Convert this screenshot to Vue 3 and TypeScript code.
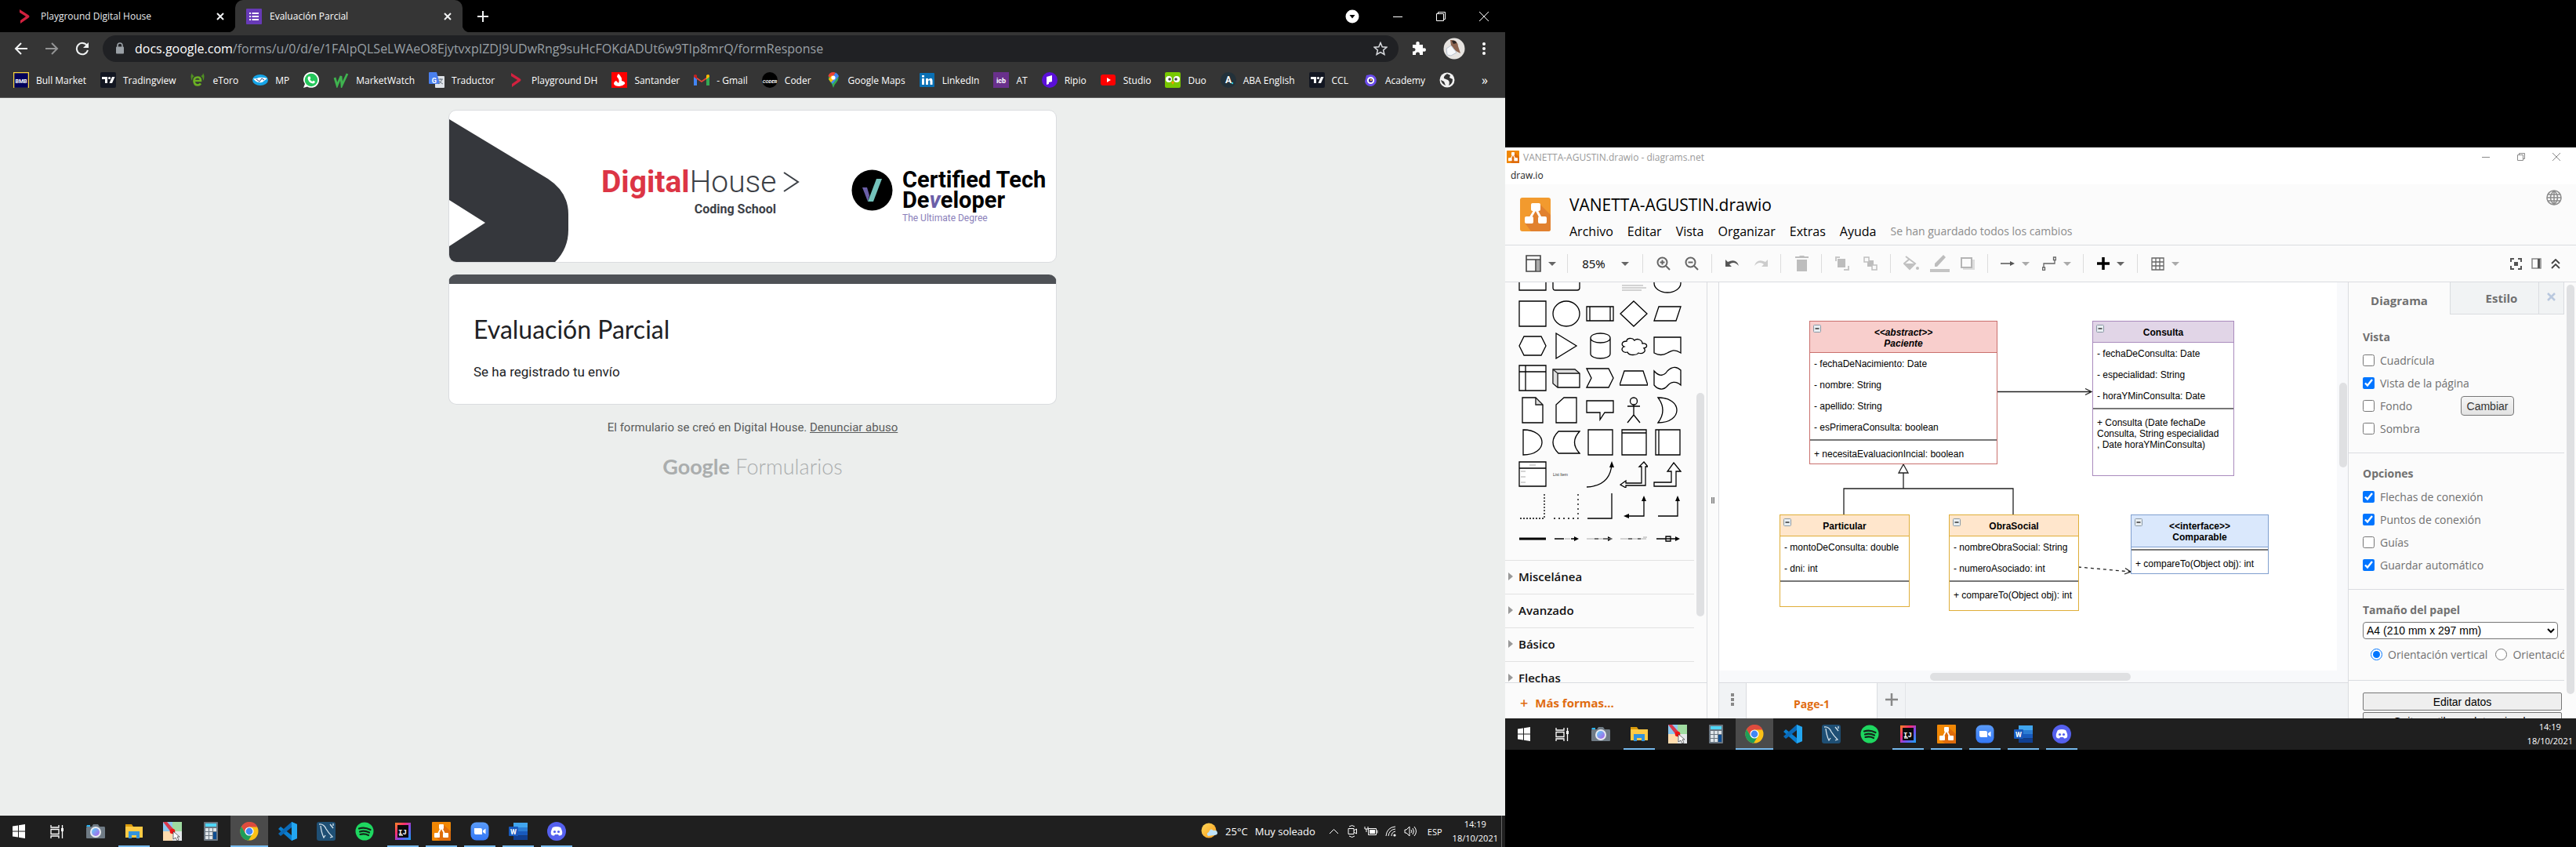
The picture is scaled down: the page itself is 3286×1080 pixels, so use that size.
<script setup lang="ts">
interface Bookmark { icon: string; label: string; mark?: string }
interface Shape { p?: string; solid?: string; grey?: string; w?: number; dash?: string; open?: boolean; text?: string; thin?: string }
interface UmlBox { id: string; head: string[]; attrs: string[]; methods: string[] }
interface Task { icon: string; name: string; state?: 'open' | 'active'; mark?: string }

const bookmarks: Bookmark[] = [
  { icon: 'bmb', label: 'Bull Market', mark: 'BMB' },
  { icon: 'tv', label: 'Tradingview' },
  { icon: 'etoro', label: 'eToro' },
  { icon: 'mp', label: 'MP' },
  { icon: 'wa', label: '' },
  { icon: 'mw', label: 'MarketWatch' },
  { icon: 'trad', label: 'Traductor', mark: 'G' },
  { icon: 'dh', label: 'Playground DH' },
  { icon: 'sant', label: 'Santander' },
  { icon: 'gmail', label: '- Gmail' },
  { icon: 'coder', label: 'Coder', mark: 'CODER' },
  { icon: 'maps', label: 'Google Maps' },
  { icon: 'li', label: 'LinkedIn' },
  { icon: 'icb', label: 'AT', mark: 'icb' },
  { icon: 'ripio', label: 'Ripio' },
  { icon: 'yt', label: 'Studio' },
  { icon: 'duo', label: 'Duo' },
  { icon: 'aba', label: 'ABA English', mark: 'A' },
  { icon: 'tv', label: 'CCL' },
  { icon: 'acad', label: 'Academy' },
  { icon: 'world', label: '' },
]

const tasks: Task[] = [
  { icon: 'win', name: 'Inicio' },
  { icon: 'taskview', name: 'Vista de tareas' },
  { icon: 'camera', name: 'Cámara' },
  { icon: 'folder', name: 'Explorador', state: 'open' },
  { icon: 'pick', name: 'Selector' },
  { icon: 'calc', name: 'Calculadora' },
  { icon: 'chrome', name: 'Chrome', state: 'active' },
  { icon: 'code', name: 'Code' },
  { icon: 'mysql', name: 'Workbench' },
  { icon: 'spotify', name: 'Spotify' },
  { icon: 'ij', name: 'IntelliJ', state: 'open', mark: 'IJ' },
  { icon: 'drawio', name: 'draw.io', state: 'open' },
  { icon: 'zoomapp', name: 'Zoom', state: 'open' },
  { icon: 'word', name: 'Word', state: 'open', mark: 'W' },
  { icon: 'discord', name: 'Discord', state: 'open' },
]

const shapes: Shape[] = [
  { p: 'M1 10H35V28H1Z' },
  { p: 'M4 10H32Q35 10 35 13V25Q35 28 32 28H4Q1 28 1 25V13Q1 10 4 10Z' },
  {},
  { thin: 'M3 22H30M3 25H34M3 28H28' },
  { p: 'M18 7A17 12 0 1 1 18 31A17 12 0 1 1 18 7Z' },
  { p: 'M1 1H35V33H1Z' },
  { p: 'M18 1A17 16 0 1 1 18 33A17 16 0 1 1 18 1Z' },
  { p: 'M1 8H35V26H1ZM5 8V26M31 8V26' },
  { p: 'M18 1L35 17L18 33L1 17Z' },
  { p: 'M7 8H35L29 26H1Z' },
  { p: 'M7 5H29L35 17L29 29H7L1 17Z' },
  { p: 'M5 1L31 17L5 33Z' },
  { p: 'M6 7V27C6 35 31 35 31 27V7M6 7C6 -1 31 -1 31 7C31 15 6 15 6 7Z' },
  { p: 'M9 11C3 11 1 16 6 18C0 20 4 27 10 25C12 30 22 29 24 26C29 28 35 24 31 20C37 19 35 13 29 14C29 9 22 7 19 10C16 6 9 7 9 11Z' },
  { p: 'M1 6H35V26C26 20 22 24 18 26C13 29 8 30 1 26Z' },
  { p: 'M1 1H35V33H1ZM9 1V33M1 9H35' },
  { p: 'M1 6H29L35 11V29H7L1 24ZM7 11V29M7 11H35M1 6L7 11', grey: 'M1 6H29L35 11H7V29L1 24Z' },
  { p: 'M1 5H29L35 17L29 29H1L7 17Z' },
  { p: 'M6 8H30L36 26H0Z' },
  { p: 'M1 8C8 16 14 14 18 8C24 2 30 2 35 7V26C29 20 22 22 18 27C13 33 6 32 1 26Z' },
  { p: 'M5 1H22L31 10V33H5Z M22 1V10H31', grey: 'M22 1L31 10H22Z' },
  { p: 'M15 1H31V33H5V10Z' },
  { p: 'M1 5H35V20H24L18 29V20H1Z' },
  { p: 'M18 1A4 4 0 1 1 18 10A4 4 0 1 1 18 1ZM18 10V23M10 12H26M18 23L10 33M18 23L26 33', open: true },
  { p: 'M6 1C38 1 38 33 6 33Q18 17 6 1Z' },
  { p: 'M6 1C38 1 38 33 6 33Z' },
  { p: 'M8 3H35Q22 17 35 31H8Q-6 17 8 3Z' },
  { p: 'M3 1H34V33H3Z' },
  { p: 'M3 1H34V33H3ZM3 5H34' },
  { p: 'M3 1H34V33H3ZM7 1V33' },
  { p: 'M1 1H35V32H1ZM1 9H35', thin: 'M14 5H22M3 13H9M3 20H9M3 27H9' },
  { text: 'List Item' },
  { p: 'M1 33C21 32 32 22 33 3', solid: 'M33 0L30 8H36Z', open: true },
  { p: 'M31 1L36 7H33V31H8V34L1 30L8 25V28H28V7H25Z' },
  { p: 'M26 2L35 13H29V32H1V27H23V13H18Z' },
  { p: 'M2 32H33V0', dash: '2 2', open: true },
  { p: 'M2 32H33V0', dash: '2 4', open: true },
  { p: 'M2 32H33V0', open: true },
  { p: 'M8 29H31V8', solid: 'M31 3L28 10H34ZM5 29L12 26V32Z', open: true },
  { p: 'M6 29H31V8', solid: 'M31 3L28 10H34Z', open: true },
  { p: 'M1 17H35', w: 3, open: true },
  { p: 'M3 17H15M24 17H31', solid: 'M34 17L28 14V20Z', thin: 'M16 17H23', open: true },
  { p: 'M11 17H16M22 17H31', solid: 'M34 17L28 14V20Z', thin: 'M1 17H34', open: true },
  { p: 'M11 17H16M23 17H27', thin: 'M1 17H34M30 15H35', open: true },
  { p: 'M4 17H31M16 14H22V20H16Z', solid: 'M34 17L28 14V20Z' },
]

const sections = ['Miscelánea', 'Avanzado', 'Básico', 'Flechas']
const menus = ['Archivo', 'Editar', 'Vista', 'Organizar', 'Extras', 'Ayuda']

const boxes: UmlBox[] = [
  {
    id: 'paciente',
    head: ['<<abstract>>', 'Paciente'],
    attrs: ['- fechaDeNacimiento: Date', '- nombre: String', '- apellido: String', '- esPrimeraConsulta: boolean'],
    methods: ['+ necesitaEvaluacionIncial: boolean'],
  },
  {
    id: 'consulta',
    head: ['Consulta'],
    attrs: ['- fechaDeConsulta: Date', '- especialidad: String', '- horaYMinConsulta: Date'],
    methods: ['+ Consulta (Date fechaDe', 'Consulta, String especialidad', ', Date horaYMinConsulta)'],
  },
  { id: 'particular', head: ['Particular'], attrs: ['- montoDeConsulta: double', '- dni: int'], methods: [] },
  {
    id: 'obra',
    head: ['ObraSocial'],
    attrs: ['- nombreObraSocial: String', '- numeroAsociado: int'],
    methods: ['+ compareTo(Object obj): int'],
  },
  { id: 'comparable', head: ['<<interface>>', 'Comparable'], attrs: [], methods: ['+ compareTo(Object obj): int'] },
]

const viewOptions = [
  { label: 'Cuadrícula', on: false },
  { label: 'Vista de la página', on: true },
  { label: 'Fondo', on: false },
  { label: 'Sombra', on: false },
]
const editOptions = [
  { label: 'Flechas de conexión', on: true },
  { label: 'Puntos de conexión', on: true },
  { label: 'Guías', on: false },
  { label: 'Guardar automático', on: true },
]
</script>

<template>
  <div class="desk">
    <svg class="defs" aria-hidden="true">
      <defs>
        <linearGradient id="gLens" x1="0" y1="0" x2="1" y2="1"><stop offset="0" stop-color="#5ad1f5" /><stop offset="1" stop-color="#b05be8" /></linearGradient>
        <linearGradient id="gIj" x1="0" y1="0" x2="1" y2="1"><stop offset="0" stop-color="#ff8a1f" /><stop offset=".35" stop-color="#fb2c74" /><stop offset=".6" stop-color="#7a4bf0" /><stop offset="1" stop-color="#18a5f5" /></linearGradient>
        <linearGradient id="gSun" x1="0" y1="0" x2="1" y2="1"><stop offset="0" stop-color="#ffd85a" /><stop offset="1" stop-color="#f79b1a" /></linearGradient>
        <linearGradient id="gZoom" x1="0" y1="0" x2="0" y2="1"><stop offset="0" stop-color="#5a9bf8" /><stop offset="1" stop-color="#3478f6" /></linearGradient>
      </defs>
      <symbol id="dh" viewBox="0 0 20 20"><path d="M3 1L14 8Q17 10 14 12L4 19V15L11 10L3 5Z" fill="#d2213f" /></symbol>
      <symbol id="forms" viewBox="0 0 20 20"><rect width="20" height="20" rx="1" fill="#673ab7" /><path d="M7.500 6H16M7.500 10H16M7.500 14H16" stroke="#fff" stroke-width="2" /><path d="M4 6H6M4 10H6M4 14H6" stroke="#fff" stroke-width="2" /></symbol>
      <symbol id="bmb" viewBox="0 0 20 20"><rect x=".5" y=".5" width="19" height="19" fill="#02025c" /><path d="M.500 20V.500H19.500V20" fill="none" stroke="#f5d33b" stroke-width="1.500" /></symbol>
      <symbol id="tv" viewBox="0 0 20 20"><rect width="20" height="20" rx="2" fill="#131722" /><path d="M2 6H9V14H6V9H2ZM15 6H18.500L15 14H11.500Z" fill="#fff" /><circle cx="11.500" cy="7.500" r="1.600" fill="#fff" /></symbol>
      <symbol id="etoro" viewBox="0 0 20 20"><path d="M5.500 11H14Q14 6.500 10 6.500Q5.500 6.500 5.500 11.500Q6 16.500 10 16.500Q12.500 16.500 14 14.500" fill="none" stroke="#6ab023" stroke-width="2.600" /><path d="M3 1Q0 6 3 11Q3 6 6 5Q3 4 3 1ZM17 1Q20 6 17 11Q17 6 14 5Q17 4 17 1Z" fill="#4f8f22" /></symbol>
      <symbol id="mp" viewBox="0 0 20 20"><ellipse cx="10" cy="10" rx="10" ry="7" fill="#16a5e8" /><path d="M1 8Q5 9 8 7Q12 6 19 8L15 11Q12 14 9 13Q4 13 1 8Z" fill="#fff" /><path d="M5 9L9 12L12 8L15 10" stroke="#2a3f7b" fill="none" /></symbol>
      <symbol id="wa" viewBox="0 0 20 20"><path d="M0 20L2 15Q0 12 0 10A10 10 0 1 1 5 18.500Z" fill="#fff" /><circle cx="10" cy="10" r="8.300" fill="#25c65b" /><path d="M6.500 5.500L8.500 5.500L9.300 8L8.300 9.200Q9.500 11.300 11.500 12L12.700 10.700L15 12Q14.500 14.600 12 14.500Q6.500 13.500 5.500 8Q5.500 6.500 6.500 5.500Z" fill="#fff" /></symbol>
      <symbol id="mw" viewBox="0 0 20 20"><path d="M2 7L5 17L10 5L11 17L18 2" fill="none" stroke="#3fb34f" stroke-width="2.800" /></symbol>
      <symbol id="trad" viewBox="0 0 20 20"><rect x="8" y="5" width="12" height="15" rx="1" fill="#dfe3e8" /><path d="M0 1Q0 0 1 0H10L14 15H1Q0 15 0 14Z" fill="#4a80ee" /><path d="M12 9H18M15 8V10M17 9Q15 14 12 15M13 11Q15 14 18 15" stroke="#6a7580" fill="none" /></symbol>
      <symbol id="sant" viewBox="0 0 20 20"><rect width="20" height="20" fill="#f00" /><path d="M9 2Q14 7 13 11Q18 12 17 15Q14 18 10 18Q4 18 3 15Q3 12 6 11L9 14Q11 10 7 6Q7 4 9 2Z" fill="#fff" /></symbol>
      <symbol id="gmail" viewBox="0 0 20 20"><path d="M0 4V17H4V9L10 13L16 9V17H20V4L10 11L0 4Z" fill="#ea4335" /><path d="M0 5V17H4V8Z" fill="#4285f4" /><path d="M20 5V17H16V8Z" fill="#34a853" /><path d="M16 4Q20 1 20 6L16 9Z" fill="#fbbc04" /><path d="M0 6Q0 1 4 4V9Z" fill="#c5221f" /></symbol>
      <symbol id="coder" viewBox="0 0 20 20"><circle cx="10" cy="10" r="10" fill="#000" /></symbol>
      <symbol id="maps" viewBox="0 0 20 20"><path d="M10 20Q9 15 5 11Q3 8 4 5L16 4Q18 8 14 13Q11 16 10 20Z" fill="#34a853" /><path d="M10 0Q5 0 3.500 5L8 9L13 1Q12 0 10 0Z" fill="#ea4335" /><path d="M13 .500Q16 2 17 5L9 15L6 11Z" fill="#4285f4" /><path d="M4 9L8 4L12 8L7 13Z" fill="#fbbc04" /><circle cx="10" cy="7" r="2.600" fill="#fff" /></symbol>
      <symbol id="li" viewBox="0 0 20 20"><rect y="1" width="19" height="18" rx="1" fill="#0a70b4" /><path d="M3 8H6V16H3ZM3 4H6V6.500H3ZM8 8H11V9.500Q16 5.500 16.500 11V16H13.500V11.500Q12.500 9 11 11.500V16H8Z" fill="#fff" /></symbol>
      <symbol id="icb" viewBox="0 0 20 20"><rect width="20" height="20" fill="#69308c" /></symbol>
      <symbol id="ripio" viewBox="0 0 20 20"><circle cx="10" cy="10" r="10" fill="#5a0fd8" /><path d="M6 6L13 4V12L9 13V15L6 16Z" fill="#fff" /></symbol>
      <symbol id="yt" viewBox="0 0 20 20"><rect y="3" width="19" height="14" rx="3" fill="#f00" /><path d="M8 7L13 10L8 13Z" fill="#fff" /></symbol>
      <symbol id="duo" viewBox="0 0 20 20"><rect width="20" height="20" rx="2" fill="#78c800" /><circle cx="5" cy="9" r="4" fill="#fff" /><circle cx="15" cy="9" r="4" fill="#fff" /><circle cx="6" cy="9" r="1.800" fill="#444" /><circle cx="14" cy="9" r="1.800" fill="#444" /><path d="M8 12H12L10 16Z" fill="#ff9600" /></symbol>
      <symbol id="aba" viewBox="0 0 20 20"><circle cx="10" cy="10" r="10" fill="#22313a" /><circle cx="15" cy="14" r="1.200" fill="#26c6da" /></symbol>
      <symbol id="acad" viewBox="0 0 20 20"><path d="M10 3A7.500 7.500 0 1 1 3 12L5 4Z" fill="#6a4bea" /><circle cx="10.500" cy="10.500" r="3.600" fill="#3a2c8c" stroke="#fff" stroke-width="2" /><circle cx="11" cy="10" r="1.200" fill="#fbc02d" /></symbol>
      <symbol id="world" viewBox="0 0 20 20"><circle cx="10" cy="10" r="9.500" fill="#f2f2f2" /><path d="M10 2Q5 5 6 8L11 10Q14 12 12 17Q17 15 17 9L13 7L14 4Z" fill="#333" /><path d="M2 10L6 12L8 17Q3 15 2 10Z" fill="#333" /></symbol>

      <symbol id="win" viewBox="0 0 24 24"><path d="M4 5.500L11 4.500V11.500H4ZM12 4.300L20 3V11.500H12ZM4 12.500H11V19.500L4 18.500ZM12 12.500H20V21L12 19.700Z" fill="#fff" /></symbol>
      <symbol id="taskview" viewBox="0 0 24 24"><path d="M4 4V7H14V4M4 9.500H14V15.500H4ZM4 21V18H14V21M18.500 4V21" fill="none" stroke="#fff" stroke-width="1.300" /><path d="M17 8H20V12H17Z" fill="#fff" /></symbol>
      <symbol id="camera" viewBox="0 0 24 24"><path d="M1 6H7L9 3H15L17 6H23Q24 6 24 8V20Q24 21 23 21H1Q0 21 0 20V8Q0 6 1 6Z" fill="#6f7b85" /><path d="M1 4H5V6H0Z" fill="#29b6f6" /><circle cx="12" cy="13" r="7" fill="#e8eaf0" /><circle cx="12" cy="13" r="5" fill="url(#gLens)" /></symbol>
      <symbol id="folder" viewBox="0 0 24 24"><path d="M1 3H9L11 6H22V8H1Z" fill="#d99a0c" /><path d="M1 6H23V20H1Z" fill="#ffcb45" /><path d="M5 12H19V21H15V17H9V21H5Z" fill="#3293dd" /></symbol>
      <symbol id="pick" viewBox="0 0 24 24"><rect width="24" height="24" fill="#9fdba0" /><path d="M0 0H12V12H0Z" fill="#8cc8f0" /><path d="M0 12H12V24H0Z" fill="#ffdcae" /><path d="M12 12H24V24H12Z" fill="#e4e7ea" /><path d="M0 0H5L14 10L10 13Z" fill="#d8384c" /><circle cx="12" cy="12" r="3.300" fill="#f01414" /><path d="M13 12V22L16 20L18 24L20 23L18 19H21Z" fill="#fff" stroke="#333" stroke-width=".7" /></symbol>
      <symbol id="calc" viewBox="0 0 24 24"><rect x="3" y="0" width="18" height="24" rx="1" fill="#6a7681" /><rect x="5" y="2" width="14" height="4" fill="#4fd6f7" /><path d="M5 8H9V12H5ZM10 8H14V12H10ZM15 8H19V12H15ZM5 13H9V17H5ZM10 13H14V17H10ZM5 18H9V22H5ZM10 18H14V22H10Z" fill="#dde3e8" /><path d="M15 13H19V22H15Z" fill="#0d4d92" /></symbol>
      <symbol id="chrome" viewBox="0 0 24 24"><circle cx="12" cy="12" r="11.500" fill="#fbc116" /><path d="M2 6A11.500 11.500 0 0 1 22.500 6.500H12L7 15Z" fill="#dd4b3e" /><path d="M2 6A11.500 11.500 0 0 0 11 23.500L16.500 14.500L7 14.500Z" fill="#1e9e5a" /><circle cx="12" cy="12" r="5.600" fill="#fff" /><circle cx="12" cy="12" r="4.400" fill="#4286f5" /></symbol>
      <symbol id="code" viewBox="0 0 24 24"><path d="M17 0L24 3V21L17 24L0 9L3 6L17 17Z" fill="#0a7fd0" /><path d="M17 0V7L3 18L0 15Z" fill="#0a6ab8" /><path d="M17 0L24 3V21L17 24Z" fill="#23a6f0" /></symbol>
      <symbol id="mysql" viewBox="0 0 24 24"><rect width="24" height="24" rx="3" fill="#1f4f74" /><path d="M3 3Q9 2 12 9Q15 14 20 19L17 20M5 5Q6 14 9 20L11 17M17 3L21 8M21 2V5" stroke="#d6e4ee" fill="none" stroke-width="1.300" /></symbol>
      <symbol id="spotify" viewBox="0 0 24 24"><circle cx="12" cy="12" r="11.500" fill="#1ed760" /><path d="M5 8.500Q12 6 19.500 10M6 12.500Q12 10.500 18 13.500M6.500 16Q12 14.500 17 17" stroke="#14251a" stroke-width="2.200" fill="none" stroke-linecap="round" /></symbol>
      <symbol id="ij" viewBox="0 0 24 24"><path d="M2 1H22V23H2Z" fill="url(#gIj)" /><rect x="5" y="4" width="14" height="16" fill="#0a0a0a" /><path d="M7 17H12" stroke="#fff" stroke-width="1.300" /></symbol>
      <symbol id="drawio" viewBox="0 0 24 24"><rect width="24" height="24" rx="1" fill="#f08705" /><path d="M15 4L24 12V24H10L5 19L12 9Z" fill="#df6c0c" /><path d="M12 7L7 17M12 7L17 17" stroke="#fff" stroke-width="1.800" /><rect x="9" y="3" width="6" height="6" rx="1" fill="#fff" /><rect x="3" y="14" width="7" height="6" rx="1" fill="#fff" /><rect x="14" y="14" width="7" height="6" rx="1" fill="#fff" /></symbol>
      <symbol id="zoomapp" viewBox="0 0 24 24"><rect x=".5" y=".5" width="23" height="23" rx="7" fill="url(#gZoom)" /><path d="M5 8H13Q15 8 15 10V16H7Q5 16 5 14ZM16 11L19.500 8.500V15.500L16 13Z" fill="#fff" /></symbol>
      <symbol id="word" viewBox="0 0 24 24"><path d="M6 1H24V7H6Z" fill="#41a5ee" /><path d="M6 7H24V12H6Z" fill="#2b7cd3" /><path d="M6 12H24V17.500H6Z" fill="#185abd" /><path d="M6 17.500H24V23H6Z" fill="#103f91" /><rect x="0" y="6" width="12" height="12" rx="1" fill="#185abd" /></symbol>
      <symbol id="discord" viewBox="0 0 24 24"><circle cx="12" cy="12" r="12" fill="#5560ee" /><path d="M7 7Q12 5 17 7Q20 12 19 16Q17 18 15 17.500L14 16H10L9 17.500Q7 18 5 16Q4 12 7 7Z" fill="#fff" /><circle cx="9.500" cy="12.500" r="1.600" fill="#5560ee" /><circle cx="14.500" cy="12.500" r="1.600" fill="#5560ee" /></symbol>
    </svg>

    <!-- Browser display -->
    <section class="screen browser">
      <header class="tabs">
        <div class="tab">
          <svg class="i20"><use href="#dh" /></svg><span class="tab-name">Playground Digital House</span>
          <button class="plain" aria-label="Cerrar pestaña"><svg width="10" height="10" viewBox="0 0 10 10"><path d="M1 1L9 9M9 1L1 9" class="lw2" /></svg></button>
        </div>
        <div class="tab current">
          <svg class="i20"><use href="#forms" /></svg><span class="tab-name">Evaluación Parcial</span>
          <button class="plain" aria-label="Cerrar pestaña"><svg width="10" height="10" viewBox="0 0 10 10"><path d="M1 1L9 9M9 1L1 9" class="lw2" /></svg></button>
        </div>
        <button class="plain new-tab" aria-label="Pestaña nueva"><svg width="14" height="14" viewBox="0 0 14 14"><path d="M7 0V14M0 7H14" class="lw2" /></svg></button>
        <div class="controls">
          <button class="plain" aria-label="Buscar pestañas"><svg width="18" height="18" viewBox="0 0 18 18"><circle cx="9" cy="9" r="8.500" fill="#fff" /><path d="M5.500 7H12.500L9 11.500Z" fill="#000" /></svg></button>
          <button class="plain" aria-label="Minimizar"><svg width="12" height="12" viewBox="0 0 12 12"><path d="M0 6.500H12" class="lw1" /></svg></button>
          <button class="plain" aria-label="Restaurar"><svg width="12" height="12" viewBox="0 0 12 12"><path d="M.500 2.500H9.500V11.500H.500ZM2.500 2V.500H11.500V9.500H10" class="lw1" /></svg></button>
          <button class="plain" aria-label="Cerrar"><svg width="12" height="12" viewBox="0 0 12 12"><path d="M0 0L12 12M12 0L0 12" class="lw1" /></svg></button>
        </div>
      </header>
      <nav class="nav">
        <button class="plain" aria-label="Atrás"><svg width="18" height="18" viewBox="0 0 18 18"><path d="M17 9H2M9 2L2 9L9 16" class="lw2" /></svg></button>
        <button class="plain dim" aria-label="Adelante"><svg width="18" height="18" viewBox="0 0 18 18"><path d="M1 9H16M9 2L16 9L9 16" class="lw2" /></svg></button>
        <button class="plain" aria-label="Recargar"><svg width="18" height="18" viewBox="0 0 18 18"><path d="M15 5A7.200 7.200 0 1 0 16 11" class="lw2" /><path d="M17 1V8H10Z" fill="#f1f3f4" /></svg></button>
        <div class="url">
          <svg width="12" height="15" viewBox="0 0 12 15"><path d="M3 6V4A3 3 0 0 1 9 4V6" fill="none" stroke="#9aa0a6" stroke-width="1.600" /><rect x="1" y="5.500" width="10" height="9" rx="1" fill="#9aa0a6" /></svg>
          <span class="address"><b>docs.google.com</b>/forms/u/0/d/e/1FAIpQLSeLWAeO8EjytvxpIZDJ9UDwRng9suHcFOKdADUt6w9TIp8mrQ/formResponse</span>
          <svg width="18" height="18" viewBox="0 0 18 18"><path d="M9 1.500L11.200 6.700L16.800 7.200L12.600 10.900L13.900 16.400L9 13.500L4.100 16.400L5.400 10.900L1.200 7.200L6.800 6.700Z" fill="none" stroke="#dadce0" stroke-width="1.500" /></svg>
        </div>
        <button class="plain" aria-label="Extensiones"><svg width="20" height="20" viewBox="0 0 20 20"><path d="M2 5H6.500Q5.500 1 8.500 1T10.500 5H15V9.500Q19 8.500 19 11.500T15 13.500V18H11Q11.500 14.500 8.500 14.500T6 18H2V13.500Q5.500 13.500 5.500 11.200T2 9Z" fill="#fff" /></svg></button>
        <svg width="28" height="28" viewBox="0 0 28 28"><circle cx="14" cy="14" r="13.500" fill="#e6e3e0" /><path d="M9 3Q18 2 19 11L22 20L16 17L10 10Z" fill="#8c6450" /><path d="M11 4Q16 3 17 7L13 8Z" fill="#2b2422" /><path d="M4 14L10 10L17 19L10 23L5 22Z" fill="#f7f8fa" stroke="#b9c2cf" /></svg>
        <button class="plain" aria-label="Menú"><svg width="6" height="18" viewBox="0 0 6 18"><circle cx="3" cy="3" r="2" fill="#fff" /><circle cx="3" cy="9" r="2" fill="#fff" /><circle cx="3" cy="15" r="2" fill="#fff" /></svg></button>
      </nav>
      <div class="bookmarks">
        <a v-for="(b, n) in bookmarks" :key="n" href="#" class="bookmark"><svg class="i20"><use :href="'#' + b.icon" /><text v-if="b.mark" x="10" y="14" class="mark" :class="'mark-' + b.icon">{{ b.mark }}</text></svg><span v-if="b.label">{{ b.label }}</span></a>
        <span class="more">»</span>
      </div>
      <main class="form-page">
        <div class="card banner">
          <svg class="wedge" width="153" height="194" viewBox="0 0 153 194"><path d="M0 11L126 87Q152 104 152 132V152Q152 177 134 194H0V173L46 143L0 114Z" fill="#35373c" /></svg>
          <div class="brand">
            <div class="brand-name"><b>Digital</b>House<svg width="21" height="26" viewBox="0 0 21 26"><path d="M1 1L19 13L1 25" fill="none" stroke="#3c4046" stroke-width="2" /></svg></div>
            <div class="brand-sub">Coding School</div>
          </div>
          <svg class="badge" width="53" height="53" viewBox="0 0 53 53"><circle cx="26.500" cy="26.500" r="26" fill="#000" /><path d="M14 23H20L23 33L21 41Z" fill="#6b5fa8" /><path d="M32 12H39L28 41H21Z" fill="#74c2bb" /></svg>
          <div class="degree">
            <div class="degree-name">Certified Tech<br />De<i>v</i>eloper</div>
            <div class="degree-sub">The Ultimate Degree</div>
          </div>
        </div>
        <div class="card answer">
          <h1>Evaluación Parcial</h1>
          <p>Se ha registrado tu envío</p>
        </div>
        <p class="made">El formulario se creó en Digital House. <a href="#">Denunciar abuso</a></p>
        <p class="gforms"><b>Google</b> Formularios</p>
      </main>
      <footer class="taskbar">
        <button v-for="t in tasks" :key="t.icon" class="task" :class="t.state" :aria-label="t.name"><svg class="i24"><use :href="'#' + t.icon" /><text v-if="t.mark" x="6" y="16" class="mark" :class="'mark-' + t.icon">{{ t.mark }}</text></svg></button>
        <div class="tray">
          <svg width="22" height="22" viewBox="0 0 22 22"><circle cx="10" cy="10" r="9.500" fill="url(#gSun)" /><path d="M9 17Q6 14 10 12Q12 6 16 10Q21 9 21 14Q20 16 17 16Z" fill="#bfe3fb" /></svg>
          <span class="weather">25°C</span><span class="weather">Muy soleado</span>
          <svg class="chev" width="13" height="8" viewBox="0 0 13 8"><path d="M1 7L6.500 1.500L12 7" class="lw1" /></svg>
          <svg width="12" height="18" viewBox="0 0 12 18"><path d="M1 5.500H8V12.500H1ZM8 8L11.500 6V12L8 10M2 3Q6 0 9 3M2 15Q6 18 9 15" class="lw1" /></svg>
          <svg width="18" height="14" viewBox="0 0 18 14"><path d="M5.500 3.500H15.500V11.500H5.500ZM17 5.500V9.500M1 1V4H5V1M3 4V8" class="lw1" /><path d="M7 5H14V10H7Z" fill="#fff" /></svg>
          <svg width="15" height="14" viewBox="0 0 15 14"><path d="M1 13Q2 2 13 1M4 13Q5 5 13 4M8 13Q8 8 13 7" class="lw1" /><circle cx="12" cy="12" r="1.600" fill="#fff" /></svg>
          <svg width="18" height="14" viewBox="0 0 18 14"><path d="M1 5H3L7 1V13L3 9H1ZM9 5Q11 7 9 9M11 3Q14 7 11 11M13 1Q18 7 13 13" class="lw1" /></svg>
          <span class="lang">ESP</span>
          <time class="clock">14:19<br />18/10/2021</time>
          <span class="peek"></span>
        </div>
      </footer>
    </section>

    <!-- Diagram editor display -->
    <section class="screen editor">
      <header class="winbar">
        <svg class="i16"><use href="#drawio" /></svg><span>VANETTA-AGUSTIN.drawio - diagrams.net</span>
        <div class="controls dark">
          <button class="plain" aria-label="Minimizar"><svg width="10" height="10" viewBox="0 0 10 10"><path d="M0 5.500H10" class="lg1" /></svg></button>
          <button class="plain" aria-label="Restaurar"><svg width="10" height="10" viewBox="0 0 10 10"><path d="M.500 2.500H7.500V9.500H.500ZM2.500 2V.500H9.500V7.500H8" class="lg1" /></svg></button>
          <button class="plain" aria-label="Cerrar"><svg width="10" height="10" viewBox="0 0 10 10"><path d="M0 0L10 10M10 0L0 10" class="lg1" /></svg></button>
        </div>
      </header>
      <div class="appmenu">draw.io</div>
      <div class="head">
        <svg class="logo" width="39" height="43" viewBox="0 0 39 43"><rect width="39" height="43" rx="3" fill="#f29a2e" /><path d="M25 8L39 22V40Q39 43 36 43H14L6 32L17 16Z" fill="#e1812f" /><path d="M20 14L11 29M20 14L28 29" stroke="#fff" stroke-width="3" /><rect x="14" y="7" width="12" height="10" rx="2" fill="#fff" /><rect x="6" y="24" width="11" height="9" rx="2" fill="#fff" /><rect x="23" y="24" width="11" height="9" rx="2" fill="#fff" /></svg>
        <div class="titles">
          <div class="file">VANETTA-AGUSTIN.drawio</div>
          <nav class="menus"><button v-for="m in menus" :key="m" class="plain menu">{{ m }}</button><span class="saved">Se han guardado todos los cambios</span></nav>
        </div>
        <svg class="globe" width="20" height="20" viewBox="0 0 20 20"><path d="M10 1A9 9 0 1 1 10 19A9 9 0 1 1 10 1ZM10 1Q1 10 10 19Q19 10 10 1ZM10 1V19M1 10H19M2 6H18M2 14H18" fill="none" stroke="#8c8c8c" stroke-width="1.500" /></svg>
      </div>
      <div class="tools">
        <div class="group first">
          <button class="plain wide" aria-label="Vista"><svg width="20" height="22" viewBox="0 0 20 22"><path d="M1 1H19V21H1ZM1 6H19M13 6V21" fill="none" stroke="#444" stroke-width="1.600" /><path d="M14 7H18V20H14Z" fill="#aaa" /></svg><span class="caret"></span></button>
        </div>
        <div class="group"><button class="plain percent">85%<span class="caret"></span></button></div>
        <div class="group">
          <button class="plain tool" aria-label="Acercar"><svg width="18" height="18" viewBox="0 0 18 18"><circle cx="7.500" cy="7.500" r="6" class="tg" /><path d="M12 12L17 17M7.500 4.500V10.500M4.500 7.500H10.500" class="tg" /></svg></button>
          <button class="plain tool" aria-label="Alejar"><svg width="18" height="18" viewBox="0 0 18 18"><circle cx="7.500" cy="7.500" r="6" class="tg" /><path d="M12 12L17 17M4.500 7.500H10.500" class="tg" /></svg></button>
        </div>
        <div class="group">
          <button class="plain tool" aria-label="Deshacer"><svg width="18" height="10" viewBox="0 0 18 10"><path d="M0 0V9H8L5 6Q11 1 17 8Q14 -2 3 3Z" fill="#555" /></svg></button>
          <button class="plain tool" aria-label="Rehacer"><svg width="18" height="10" viewBox="0 0 18 10"><path d="M18 0V9H10L13 6Q7 1 1 8Q4 -2 15 3Z" fill="#ccc" /></svg></button>
        </div>
        <div class="group">
          <button class="plain tool" aria-label="Borrar"><svg width="17" height="20" viewBox="0 0 17 20"><path d="M0 1H5L6 0H11L12 1H17V3H0ZM2 5H15V20H2Z" fill="#bdbdbd" /></svg></button>
        </div>
        <div class="group">
          <button class="plain tool" aria-label="Al frente"><svg width="18" height="18" viewBox="0 0 18 18"><path d="M3 3H13V14H3Z" fill="#bdbdbd" /><path d="M1 6V1H6M17 12V17H11" fill="none" stroke="#c8c8c8" stroke-width="2" /></svg></button>
          <button class="plain tool" aria-label="Al fondo"><svg width="18" height="18" viewBox="0 0 18 18"><path d="M5 5H13V13H5Z" fill="#bdbdbd" /><path d="M1 1H7V7H1ZM11 11H17V17H11Z" fill="#fbfbfb" stroke="#c0c0c0" stroke-width="1.500" /></svg></button>
        </div>
        <div class="group">
          <button class="plain tool" aria-label="Relleno"><svg width="20" height="20" viewBox="0 0 20 20"><path d="M3 1L15 10L8 17L1 10L8 4" fill="none" stroke="#c0c0c0" stroke-width="2" /><path d="M2 10H14L8 16Z" fill="#c0c0c0" /><circle cx="18" cy="16" r="2" fill="#c0c0c0" /></svg></button>
          <button class="plain tool" aria-label="Línea"><svg width="25" height="22" viewBox="0 0 25 22"><path d="M6 15V11L17 0L20 3L9 15ZM12 15H20" fill="#bdbdbd" /><path d="M0 20H25" stroke="#c4c4c4" stroke-width="4" /></svg></button>
          <button class="plain tool" aria-label="Sombra"><svg width="18" height="16" viewBox="0 0 18 16"><path d="M3 3H18V16H3Z" fill="#ddd" /><path d="M1 1H14V13H1Z" fill="#fbfbfb" stroke="#b5b5b5" stroke-width="2" /></svg></button>
        </div>
        <div class="group">
          <button class="plain wide" aria-label="Conexión"><svg width="18" height="8" viewBox="0 0 18 8"><path d="M0 4H13" stroke="#555" stroke-width="1.500" /><path d="M18 4L12 1V7Z" fill="#555" /></svg><span class="caret pale"></span></button>
          <button class="plain wide" aria-label="Puntos de ruta"><svg width="18" height="18" viewBox="0 0 18 18"><path d="M2 14V9H16V5M.500 14H3.500V17.500H.500ZM14.500 1H17.500V4.500H14.500Z" fill="none" stroke="#666" stroke-width="1.300" /></svg><span class="caret pale"></span></button>
        </div>
        <div class="group">
          <button class="plain wide" aria-label="Insertar"><svg width="16" height="16" viewBox="0 0 16 16"><path d="M8 0V16M0 8H16" stroke="#000" stroke-width="3.500" /></svg><span class="caret"></span></button>
        </div>
        <div class="group last">
          <button class="plain wide" aria-label="Tabla"><svg width="17" height="17" viewBox="0 0 17 17"><path d="M1 1H16V16H1ZM1 6H16M1 11H16M6 1V16M11 1V16" fill="none" stroke="#666" stroke-width="1.300" /></svg><span class="caret pale"></span></button>
        </div>
        <div class="view-tools">
          <svg width="15" height="15" viewBox="0 0 15 15"><path d="M1 5V1H5M10 1H14V5M14 10V14H10M5 14H1V10" fill="none" stroke="#555" stroke-width="2" /><path d="M5 5H10V10H5Z" fill="#555" /></svg>
          <svg width="13" height="14" viewBox="0 0 13 14"><path d="M1 1H12V13H1Z" fill="none" stroke="#888" stroke-width="1.500" /><path d="M8 1H11V13H8Z" fill="#555" /></svg>
          <svg width="12" height="13" viewBox="0 0 12 13"><path d="M1 6L6 1L11 6M1 12L6 7L11 12" fill="none" stroke="#444" stroke-width="1.800" /></svg>
        </div>
      </div>
      <div class="work">
        <aside class="library">
          <div class="library-scroll">
            <div class="library-list">
              <div class="palette">
                <svg v-for="(s, n) in shapes" :key="n" width="36" height="34" viewBox="0 0 36 34" class="shape">
                  <path v-if="s.p" :d="s.p" :fill="s.open ? 'none' : '#fff'" stroke="#000" :stroke-width="s.w || 1.3" :stroke-dasharray="s.dash" />
                  <path v-if="s.grey" :d="s.grey" fill="#999" fill-opacity=".3" />
                  <path v-if="s.solid" :d="s.solid" fill="#000" />
                  <path v-if="s.thin" :d="s.thin" stroke="#aaa" fill="none" />
                  <text v-if="s.text" x="1" y="19" font-size="5" fill="#333" font-family="Liberation Sans, sans-serif">{{ s.text }}</text>
                </svg>
              </div>
              <button v-for="s in sections" :key="s" class="plain section">{{ s }}</button>
            </div>
            <span class="thumb library-thumb"></span>
          </div>
          <button class="plain more-shapes"><span>+</span>Más formas...</button>
        </aside>
        <div class="splitter"><span></span></div>
        <div class="stage">
          <div class="canvas-row">
            <div class="canvas">
              <svg class="edges" width="788" height="495" viewBox="0 0 788 495">
                <g fill="none" stroke="#222" stroke-width="1.300">
                  <path d="M355 139.500H475M467 135.500L475 139.500L467 143.500" />
                  <path d="M235 243V263M159 297V263H375V297" />
                  <path d="M235 232L241 243H229Z" fill="#fff" />
                  <path d="M458 363L525 369" stroke-dasharray="4 4" />
                  <path d="M518 364.500L525 369L517 372" />
                </g>
              </svg>
              <article v-for="b in boxes" :key="b.id" class="uml" :class="b.id">
                <header><svg class="fold" width="10" height="10" viewBox="0 0 10 10"><rect x=".5" y=".5" width="9" height="9" rx="1" fill="#e9eef2" stroke="#8b9aa6" /><path d="M2.500 5H7.500" stroke="#333" stroke-width="1.500" /></svg><div v-for="h in b.head" :key="h">{{ h }}</div></header>
                <p v-for="a in b.attrs" :key="a">{{ a }}</p>
                <div class="methods"><div v-for="m in b.methods" :key="m">{{ m }}</div></div>
              </article>
            </div>
            <div class="vgutter"><span class="thumb canvas-thumb"></span></div>
          </div>
          <div class="hgutter"><span class="thumb wide-thumb"></span></div>
          <div class="pages">
            <button class="plain page-menu" aria-label="Páginas"><svg width="4" height="16" viewBox="0 0 4 16"><path d="M0 0H4V4H0ZM0 6H4V10H0ZM0 12H4V16H0Z" fill="#888" /></svg></button>
            <button class="plain page">Page-1</button>
            <button class="plain page-add" aria-label="Insertar página"><svg width="16" height="16" viewBox="0 0 16 16"><path d="M8 0V16M0 8H16" stroke="#888" stroke-width="2.500" /></svg></button>
          </div>
        </div>
        <aside class="format">
          <div class="format-main">
            <div class="format-tabs"><button class="plain on">Diagrama</button><button class="plain off">Estilo</button><button class="plain x" aria-label="Ocultar"><svg width="11" height="11" viewBox="0 0 11 11"><path d="M1 1L10 10M10 1L1 10" stroke="#b9c8de" stroke-width="2.500" /></svg></button></div>
            <section class="options">
              <h2>Vista</h2>
              <div v-for="o in viewOptions" :key="o.label" class="option">
                <label><input type="checkbox" :checked="o.on" />{{ o.label }}</label>
                <button v-if="o.label === 'Fondo'" class="change">Cambiar</button>
              </div>
            </section>
            <section class="options">
              <h2>Opciones</h2>
              <div v-for="o in editOptions" :key="o.label" class="option"><label><input type="checkbox" :checked="o.on" />{{ o.label }}</label></div>
            </section>
            <section class="options">
              <h2><label for="paper">Tamaño del papel</label></h2>
              <select id="paper" class="paper"><option>A4 (210 mm x 297 mm)</option></select>
              <div class="option orient">
                <label><input type="radio" name="orient" checked />Orientación vertical</label>
                <label><input type="radio" name="orient" />Orientación horizontal</label>
              </div>
            </section>
            <div class="actions"><button>Editar datos</button><button>Quitar estilo predeterminado</button></div>
          </div>
          <div class="format-bar"><span class="thumb format-thumb"></span></div>
        </aside>
      </div>
      <footer class="taskbar">
        <button v-for="t in tasks" :key="t.icon" class="task" :class="t.state" :aria-label="t.name"><svg class="i24"><use :href="'#' + t.icon" /><text v-if="t.mark" x="6" y="16" class="mark" :class="'mark-' + t.icon">{{ t.mark }}</text></svg></button>
        <div class="tray"><time class="clock">14:19<br />18/10/2021</time></div>
      </footer>
    </section>
  </div>
</template>

<style>
body { margin: 0; background: #000; }
</style>

<style scoped>
.desk { display: flex; height: 100vh; background: #000; font-family: "Open Sans", "Noto Sans", sans-serif; overflow: hidden; }
.desk *, .desk { box-sizing: border-box; }
.defs { position: absolute; width: 0; height: 0; }
.screen { display: flex; flex-direction: column; min-width: 0; }
.browser { flex: 1920 1 0; }
.editor { flex: 1366 1 0; margin: 188px 0 124px; background: #fff; }
.plain { border: 0; padding: 0; background: none; font: inherit; color: inherit; display: flex; align-items: center; justify-content: center; }
svg { display: block; flex: none; }
.i16 { width: 16px; height: 16px; }
.i20 { width: 20px; height: 20px; }
.i24 { width: 24px; height: 24px; }
.lw1 { fill: none; stroke: #fff; stroke-width: 1px; }
.lw2 { fill: none; stroke: #f1f3f4; stroke-width: 2px; }
.lg1 { fill: none; stroke: #8a8a8a; }
.tg { fill: none; stroke: #666; stroke-width: 2px; }
.mark { font-family: Roboto, sans-serif; font-size: 9px; font-weight: 700; text-anchor: middle; fill: #fff; }
.mark-bmb { font-size: 7px; }
.mark-coder { font-size: 6px; font-style: italic; }
.mark-trad { text-anchor: end; }
.mark-aba { font-size: 12px; }
.mark-ij { text-anchor: start; font-family: "Liberation Mono", monospace; }

.tabs { height: 41px; display: flex; align-items: center; color: #e8eaed; font-size: 12px; }
.tab { width: 290px; height: 41px; padding: 0 14px; display: flex; align-items: center; gap: 10px; flex: none; }
.tab:first-child { width: 300px; padding-left: 22px; }
.tab-name { flex: 1; white-space: nowrap; }
.current { background: #353535; border-radius: 10px 10px 0 0; position: relative; color: #fff; }
.current::before, .current::after { content: ""; position: absolute; bottom: 0; width: 10px; height: 10px; }
.current::before { left: -10px; background: radial-gradient(circle at 0 0, transparent 10px, #353535 11px); }
.current::after { right: -10px; background: radial-gradient(circle at 100% 0, transparent 10px, #353535 11px); }
.new-tab { margin-left: 19px; }
.controls { margin-left: auto; display: flex; align-items: center; gap: 43px; padding-right: 21px; height: 36px; }
.controls.dark { gap: 35px; padding-right: 20px; height: auto; }

.nav { height: 41px; background: #353535; display: flex; align-items: center; padding: 0 24px 0 18px; gap: 21px; }
.dim { opacity: .5; }
.url { flex: 1; height: 34px; border-radius: 17px; background: #202124; display: flex; align-items: center; padding: 0 14px 0 16px; min-width: 0; margin-left: -4px; margin-right: -5px; }
.address { flex: 1; margin-left: 13px; font-size: 16px; color: #9aa0a6; white-space: nowrap; }
.address b { font-weight: 400; color: #fff; }
.bookmarks { height: 43px; background: #353535; border-bottom: 1px solid #5c5c5c; display: flex; align-items: center; padding: 0 22px 2px 17px; gap: 18px; color: #fff; font-size: 12px; white-space: nowrap; }
.bookmark { display: flex; align-items: center; gap: 9px; color: inherit; text-decoration: none; }
.more { margin-left: auto; font-size: 16px; }

.form-page { flex: 1; min-height: 0; background: #eceeed; display: flex; flex-direction: column; align-items: center; padding-top: 15px; font-family: Roboto, sans-serif; }
.card { width: 776px; background: #fff; border: 1px solid #dadcdf; border-radius: 10px; overflow: hidden; flex: none; }
.banner { height: 195px; display: flex; align-items: flex-start; }
.brand { margin: 66px 0 0 41px; width: 252px; color: #3c4046; }
.brand-name { display: flex; align-items: center; font-size: 39px; line-height: 50px; font-weight: 300; white-space: nowrap; }
.brand-name b { color: #dc3545; font-weight: 700; }
.brand-name svg { margin-left: 8px; }
.brand-sub { font-size: 16px; line-height: 20px; font-weight: 700; width: 223px; text-align: right; }
.badge { margin: 75px 0 0 67px; }
.degree { margin: 75px 0 0 12px; white-space: nowrap; color: #000; }
.degree-name { font-size: 29px; line-height: 26px; font-weight: 700; }
.degree-name i { color: #6b5fa8; }
.degree-sub { font-size: 12px; line-height: 20px; color: #8a80ba; }
.answer { margin-top: 15px; height: 166px; border-top: 12px solid #4e5156; padding: 36px 31px; }
.answer h1 { margin: 0; font: 400 32px/44px Lato, sans-serif; color: #202124; }
.answer p { margin: 20px 0 0; font-size: 17px; line-height: 24px; color: #202124; }
.made { margin: 19px 0 0; font-size: 15px; line-height: 20px; color: #5a5c5c; }
.made a { color: inherit; }
.gforms { margin: 22px 0 0; font: 300 27px/36px Lato, sans-serif; color: #aaadad; }
.gforms b { font-weight: 700; }

.taskbar { height: 40px; flex: none; background: #1f1f1f; display: flex; color: #fff; gap: 1px; }
.task { width: 48px; height: 40px; border: 0; border-bottom: 2px solid transparent; background: none; padding: 2px 0 0; display: flex; align-items: center; justify-content: center; position: relative; flex: none; }
.open::after, .active::after { content: ""; position: absolute; left: 4px; right: 4px; bottom: -2px; height: 2px; background: #76b9ed; }
.active { background: #4b4b4b; }
.active::after { left: 0; right: 0; }
.tray { margin-left: auto; display: flex; align-items: center; white-space: nowrap; gap: 9px; }
.chev { margin: 0 2px 0 8px; }
.weather { font-size: 13px; }
.lang { font-size: 11px; margin-left: 3px; }
.clock { font-size: 11px; line-height: 18px; text-align: center; padding: 0 4px; }
.peek { border-left: 1px solid #666; height: 40px; width: 5px; margin-left: -9px; }

.winbar { height: 24px; display: flex; align-items: center; padding-left: 2px; gap: 5px; color: #999; font-size: 12px; flex: none; }
.appmenu { height: 23px; flex: none; padding-left: 7px; font-size: 12px; line-height: 23px; color: #222; }
.head { height: 78px; flex: none; background: #fbfbfb; border-bottom: 1px solid #dadce0; display: flex; padding: 0 18px 0 19px; }
.logo { margin-top: 17px; }
.titles { margin-left: 24px; padding-top: 10px; }
.file { font-size: 21px; line-height: 32px; color: #000; }
.menus { display: flex; align-items: center; gap: 18px; font-size: 16px; line-height: 24px; margin-top: 6px; color: #000; }
.saved { font-size: 14px; color: #8c8c8c; white-space: nowrap; }
.globe { margin: 7px 0 0 auto; }
.tools { height: 47px; flex: none; background: #fbfbfb; border-bottom: 1px solid #dadce0; display: flex; align-items: center; color: #000; }
.group { display: flex; align-items: center; height: 24px; padding: 0 7px 0 8px; border-right: 1px solid #dcdcdc; }
.first { padding-left: 19px; }
.last { border-right: 0; }
.tool { width: 36px; }
.wide { width: 53px; gap: 9px; }
.percent { width: 80px; gap: 20px; font-size: 15px; }
.caret { border: 5px solid transparent; border-top-color: #666; border-bottom: 0; }
.pale { border-top-color: #aaa; }
.view-tools { margin-left: auto; display: flex; align-items: center; gap: 12px; padding-right: 20px; }

.work { flex: 1; min-height: 0; display: flex; }
.library { width: 258px; flex: none; background: #fbfbfb; border-right: 1px solid #dadce0; display: flex; flex-direction: column; }
.library-scroll { flex: 1; min-height: 0; overflow: hidden; display: flex; border-bottom: 1px solid #dadce0; }
.library-list { width: 241px; }
.palette { display: grid; grid-template-columns: repeat(5, 43px); grid-auto-rows: 41px; margin-top: -22px; padding: 0 0 7px 13px; }
.shape { place-self: center; }
.section { width: 100%; height: 43px; justify-content: flex-start; gap: 7px; padding: 0 0 2px 4px; border-top: 1px solid #e2e2e2; font-size: 15px; font-weight: 600; color: #111; }
.section::before { content: ""; border: 5px solid transparent; border-left: 6px solid #999; border-right: 0; }
.thumb { display: block; border-radius: 5px; background: #dfe0e2; }
.library-thumb { width: 10px; height: 285px; margin: 141px 0 0 3px; }
.more-shapes { height: 45px; justify-content: flex-start; gap: 9px; padding: 5px 0 0 19px; font-size: 15px; font-weight: 700; color: #e06c10; }
.more-shapes span { font-size: 18px; font-weight: 600; }
.splitter { width: 15px; flex: none; background: #fbfbfb; border-right: 1px solid #dadce0; display: flex; align-items: center; justify-content: center; }
.splitter span { width: 4px; height: 8px; border: 1px solid #777; border-width: 0 1px; background: #bbb; }
.stage { flex: 1; min-width: 0; display: flex; flex-direction: column; }
.canvas-row { flex: 1; min-height: 0; display: flex; }
.canvas { flex: 1; min-width: 0; position: relative; background: #fff; overflow: hidden; }
.vgutter { width: 14px; background: #f8f9fb; }
.canvas-thumb { width: 10px; height: 108px; margin: 128px 0 0 3px; }
.hgutter { height: 15px; background: #f8f9fb; padding-top: 3px; }
.wide-thumb { width: 256px; height: 10px; margin-left: 269px; }
.pages { height: 46px; border-top: 1px solid #dadce0; background: #f1f3f5; display: flex; }
.page-menu { width: 35px; border-right: 1px solid #dadce0; padding-bottom: 3px; }
.page { width: 167px; border-right: 1px solid #dadce0; background: #fff; color: #e06c10; font-weight: 700; font-size: 14px; padding-top: 8px; }
.page-add { width: 36px; border-right: 1px solid #e2e4e8; padding-bottom: 3px; }
.edges { position: absolute; left: 0; top: 0; }
.uml { position: absolute; border: 1px solid; background: #fff; font: 12px/14px "Liberation Sans", Arial, sans-serif; color: #000; }
.uml header { height: 27px; padding-top: 7px; border-bottom: 1px solid; font-weight: 700; text-align: center; position: relative; }
.fold { position: absolute; left: 4px; top: 4px; }
.uml p { margin: 0; padding: 7px 5px 6px; height: 27px; white-space: nowrap; }
.methods { border-top: 2px solid #777; margin-top: 2px; padding: 10px 5px; white-space: nowrap; }
.uml header, .uml { border-color: var(--line); }
.uml header { background: var(--fill); }
.paciente { --line: #c9706d; --fill: #f8cecc; left: 115px; top: 49px; width: 240px; height: 183px; }
.paciente header { height: 40px; font-style: italic; }
.consulta { --line: #a98bbd; --fill: #e1d5e7; left: 476px; top: 49px; width: 181px; height: 198px; }
.particular { --line: #dfae38; --fill: #ffe6cc; left: 77px; top: 296px; width: 166px; height: 118px; }
.obra { --line: #dfae38; --fill: #ffe6cc; left: 293px; top: 296px; width: 166px; height: 123px; }
.comparable { --line: #7f9fcf; --fill: #dae8fc; left: 525px; top: 296px; width: 176px; height: 76px; }
.comparable header { height: 41px; }

.format { width: 291px; flex: none; background: #fbfbfb; border-left: 1px solid #dadce0; display: flex; overflow: hidden; color: #707070; font-size: 14px; }
.format-main { width: 275px; overflow: hidden; flex: none; }
.format-tabs { height: 41px; display: flex; margin-bottom: 3px; font-size: 15px; font-weight: 700; }
.on { width: 129px; padding-top: 4px; }
.off { width: 114px; background: #f1f3f4; border: 1px solid #dadce0; border-top: 0; padding-left: 18px; }
.x { width: 32px; background: #f1f3f4; border: 1px solid #dadce0; border-width: 0 1px 1px 0; padding-bottom: 4px; }
.options { padding: 15px 8px 16px 18px; border-bottom: 1px solid #dadce0; }
.options h2 { margin: 0 0 4px; font-size: 14px; line-height: 22px; font-weight: 700; }
.option { height: 29px; display: flex; align-items: center; white-space: nowrap; }
.option label { display: flex; align-items: center; gap: 7px; }
.option input { width: 15px; height: 15px; margin: 0; flex: none; accent-color: #0075ff; }
.option label:first-child { width: 125px; }
.change { height: 25px; width: 68px; border: 1px solid #777; border-radius: 4px; background: linear-gradient(#f5f5f5, #e2e2e2); font: 14px "Liberation Sans", Arial, sans-serif; color: #333; padding: 0; }
.paper { width: 249px; height: 22px; padding: 0; border: 1px solid #777; border-radius: 4px; background: #fff; font: 14px "Liberation Sans", Arial, sans-serif; color: #000; display: block; }
.orient { margin: 5px 0 2px; padding-left: 10px; gap: 10px; }
.option.orient label:first-child { width: auto; }
.actions { padding: 15px 3px 0 18px; display: flex; flex-direction: column; gap: 2px; }
.actions button { height: 23px; border: 1px solid #777; border-radius: 2px; background: #efefef; font: 14px "Liberation Sans", Arial, sans-serif; color: #000; padding: 0; }
.format-bar { padding: 3px 0 0 3px; }
.format-thumb { width: 10px; height: 522px; }
</style>
